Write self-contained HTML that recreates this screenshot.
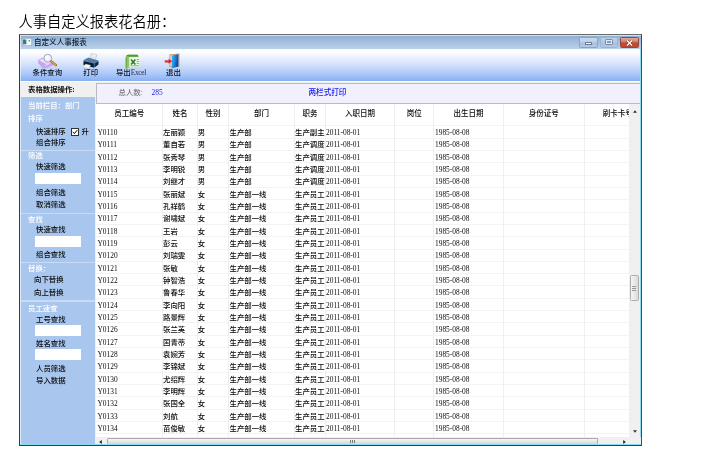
<!DOCTYPE html>
<html lang="zh-CN"><head><meta charset="utf-8"><title>人事自定义报表花名册</title>
<style>
html,body{margin:0;padding:0;background:#fff;}
body{width:710px;height:470px;position:relative;overflow:hidden;font-family:"Liberation Serif","Noto Sans CJK SC",serif;}
.a{position:absolute;}
.t{position:absolute;white-space:nowrap;font-size:7.4px;line-height:10px;height:10px;color:#0a0a0a;font-weight:500;filter:blur(0.3px);}
.w{color:#fff;}
.sb{font-size:7.4px;}
.inp{position:absolute;background:#fff;left:34.5px;width:46.5px;height:11px;}
.sep{position:absolute;left:21px;width:74px;height:1.4px;background:#c8dbf5;}
.hl{position:absolute;left:96px;width:533px;height:1px;background:#f3f3f3;}
.vl{position:absolute;width:1px;background:#efefef;}
.h{position:absolute;white-space:nowrap;font-size:7.5px;line-height:10px;height:10px;color:#0a0a0a;font-weight:500;text-align:center;top:108.7px;filter:blur(0.3px);}
</style></head><body>
<div class="a" id="hd" style="left:18.5px;top:12px;font-weight:350;font-family:'Liberation Sans','Noto Sans CJK SC',sans-serif;font-size:14.25px;line-height:20px;color:#000;white-space:nowrap;transform-origin:0 50%;transform:scaleY(1.07)">人事自定义报表花名册：</div>
<!-- window frame -->
<div class="a" id="win" style="left:19px;top:34px;width:623px;height:412px;background:#f0f0f0;box-sizing:border-box;border:1px solid #155a72;border-top-color:#6a6a6a;border-left-color:#3a3a3a;border-bottom-color:#0f4d5e;"></div>
<!-- title bar -->
<div class="a" style="left:20px;top:35px;width:621px;height:14px;background:linear-gradient(#d3e2f3 0,#d3e2f3 1px,#90b1d6 1.5px,#a6c2e1 55%,#bbd1ea 100%);"></div>
<svg class="a" style="left:22px;top:38px" width="10" height="8" viewBox="0 0 10 8"><rect x="0.3" y="0.3" width="9.4" height="7.4" fill="#f4f6f8" stroke="#9aa6b4" stroke-width="0.6"/><rect x="1.2" y="1.6" width="3.2" height="4.6" fill="#2f8f6a"/><rect x="1.2" y="1.6" width="1.6" height="4.6" fill="#2b6fa8"/><rect x="6.6" y="2" width="1.4" height="1.4" fill="#3b8ad0"/></svg>
<div class="t" style="left:34px;top:37.5px;font-size:7.55px;color:#10182a;font-weight:500">自定义人事报表</div>
<div class="a" style="left:579px;top:37.4px;width:18.5px;height:10.2px;border-radius:1.5px;background:linear-gradient(#c9d9ee 0%,#bccfe8 48%,#a9c1e1 52%,#b0c7e5 100%);box-sizing:border-box;border:1px solid #8ba4c6;"></div>
<div class="a" style="left:585px;top:42px;width:7px;height:3px;background:#fbfcfe;border:0.6px solid #6a7a92;box-sizing:border-box;border-radius:0.5px"></div>
<div class="a" style="left:600px;top:37.4px;width:18px;height:10.2px;border-radius:1.5px;background:linear-gradient(#bdd0e9 0%,#b2c8e4 48%,#a7bfdf 52%,#b0c7e5 100%);box-sizing:border-box;border:1px solid #9cb4d2;"></div>
<div class="a" style="left:605px;top:39.3px;width:8px;height:5.7px;border:1px solid #7c8ca6;box-sizing:border-box;background:#dfe7f2;border-radius:1.2px"></div>
<div class="a" style="left:607.3px;top:41.4px;width:3.4px;height:1.5px;background:#8a9ab2;"></div>
<div class="a" style="left:620px;top:37.4px;width:19px;height:10.2px;border-radius:1.5px;background:linear-gradient(#e2aa9a 0%,#d37a66 45%,#c24c36 52%,#bd4834 100%);box-sizing:border-box;border:1px solid #94483c;"></div>
<svg class="a" style="left:625px;top:38.5px" width="9" height="8" viewBox="0 0 9 8"><path d="M2 1.6 L7 6.4 M7 1.6 L2 6.4" stroke="#7c3226" stroke-width="2.4"/><path d="M2 1.6 L7 6.4 M7 1.6 L2 6.4" stroke="#fff" stroke-width="1.4"/></svg>
<div class="a" style="left:20px;top:49px;width:621px;height:32px;background:linear-gradient(#f6f9fe 0%,#ffffff 6%,#f0f5fe 22%,#d1e0fb 50%,#abc8f8 78%,#87b0f4 100%);"></div>
<div class="a" style="left:20px;top:81px;width:621px;height:1px;background:#fafafa;"></div>
<div class="a" style="left:20px;top:35px;width:1px;height:62px;background:rgba(255,255,255,0.55);"></div>
<svg class="a" style="left:30px;top:48px" width="40" height="32" viewBox="30 48 40 32">
<path d="M38.2 60 L42.4 57.6 L53.2 61.6 L53 65.6 L45 68.6 L42.6 68 L38.4 63.2 Z" fill="#c9a2f0"/>
<path d="M39 60.2 L42.6 58.4 L52.2 62 L47 64.6 Z" fill="#e3d2f8"/>
<path d="M40.6 60.8 L45.4 62.6 M42 60 L47 62 M44.6 65.6 L49.6 63.6" stroke="#f6f0fc" stroke-width="0.7"/>
<circle cx="47.8" cy="58.2" r="3.9" fill="#eceef5" stroke="#a3a7c6" stroke-width="1"/>
<circle cx="47.4" cy="57.6" r="2.2" fill="#f8f9fc"/>
<path d="M51.3 61.4 L55.9 65.2" stroke="#8a5a18" stroke-width="2.2" stroke-linecap="round"/>
<path d="M51.5 61.5 L55.8 65.1" stroke="#f2a230" stroke-width="1.4" stroke-linecap="round"/>
</svg>
<div class="t" style="left:32.5px;top:68.3px;color:#0b1020;font-weight:500">条件查询</div>
<svg class="a" style="left:72px;top:48px" width="40" height="32" viewBox="72 48 40 32">
<path d="M89.8 59.2 L91.4 53.6 L97 54.9 L94.8 60.6 Z" fill="#f6f8fa" stroke="#9fa8b6" stroke-width="0.5"/>
<path d="M91.6 55.6 L95.6 56.6 M91.2 57 L95 58 M90.8 58.3 L94.4 59.3" stroke="#b8c0cc" stroke-width="0.45"/>
<path d="M83.6 60 L88.4 57.6 L98.4 60.4 L98.4 64.6 L94 67.8 L83.6 65 Z" fill="#2f93e4"/>
<path d="M84.6 60.3 L88.6 58.3 L97.4 60.7 L93.8 62.9 Z" fill="#6e767f"/>
<path d="M83.6 61.2 L93.8 63.6 L93.8 67.6 L83.6 65 Z" fill="#14171c"/>
<path d="M94.6 63.6 L98.4 61.2 L98.4 64.6 L94.6 67.4 Z" fill="#23262d"/>
<path d="M85.6 64 L90.6 65.2 L88.8 68.6 L83 67 Z" fill="#f6f7f9" stroke="#b0b6c0" stroke-width="0.35"/>
</svg>
<div class="t" style="left:83.3px;top:68.3px;color:#0b1020;font-weight:500">打印</div>
<svg class="a" style="left:110px;top:48px" width="40" height="32" viewBox="110 48 40 32">
<path d="M125.6 68.4 L125.6 57.6 Q125.6 54.8 128.4 54.8 L137.6 54.8 L138.6 56.6 L130 56.8 Q129.4 56.8 129.4 57.6 L129.4 67.6 Z" fill="#8fca62"/>
<path d="M126.4 56 Q127 54.8 128.4 54.8 L137.6 54.8 L138.6 56.8 L129.6 56.8 Z" fill="#4e9c2c"/>
<path d="M125.6 58 L125.6 68.4 L127.2 68 L127.2 57 Z" fill="#6db444"/>
<rect x="129.6" y="57.8" width="9.6" height="9.2" fill="#f4f9f0"/>
<path d="M131 59.4 L135.4 64.4 M135.4 59.4 L131 64.4" stroke="#1c7a22" stroke-width="1.5"/>
<path d="M136.6 59.6 h2.4 M136.6 61.6 h2.4 M136.6 63.6 h2.4 M130.6 65.8 h8.4" stroke="#6cb54a" stroke-width="0.9"/>
</svg>
<div class="t" style="left:115.9px;top:68.3px;color:#0b1020;font-weight:500">导出<span style="letter-spacing:-0.3px;color:#2a3048">Excel</span></div>
<svg class="a" style="left:152px;top:48px" width="40" height="32" viewBox="152 48 40 32">
<defs><linearGradient id="dg" x1="0" y1="0" x2="1" y2="0.3"><stop offset="0" stop-color="#3cc0f6"/><stop offset="0.55" stop-color="#1a86e0"/><stop offset="1" stop-color="#0a48a8"/></linearGradient></defs>
<path d="M169.4 54.6 L179.4 53.6 L179.4 66.8 L169.4 66.8 Z" fill="#c8946a"/>
<path d="M170.4 55.4 L178.4 54.6 L178.4 66 L170.4 66 Z" fill="#f2ece4"/>
<path d="M171.6 55.6 L178.4 54.2 L178.4 66.6 L171.6 68.4 Z" fill="url(#dg)"/>
<path d="M164.8 60.2 H168.6 V58.8 L172.2 61.3 L168.6 63.8 V62.4 H164.8 Z" fill="#e01c2c"/>
<path d="M165.4 60.8 H168.8" stroke="#f7a0a4" stroke-width="0.5"/>
</svg>
<div class="t" style="left:166px;top:68.3px;color:#0b1020;font-weight:500">退出</div>
<div class="a" style="left:20px;top:82px;width:75px;height:15px;background:#f0f0f0;"></div>
<div class="t" style="left:28px;top:84.5px;font-weight:700;color:#111">表格数据操作:</div>
<div class="a" style="left:20px;top:97px;width:74.6px;height:347px;background:#a9c7ee;border-left:1px solid #dfeafa;box-sizing:border-box"></div>
<div class="a" style="left:20px;top:444px;width:621px;height:1px;background:#86dcf3;"></div>
<div class="t w" style="left:28px;top:100.5px">当前栏目：部门</div>
<div class="t w" style="left:28px;top:113.5px">排序</div>
<div class="t" style="left:36px;top:126.5px">快速排序</div>
<div class="a" style="left:71px;top:128px;width:8px;height:8px;background:#fff;box-sizing:border-box;border:1px solid #333;"></div>
<svg class="a" style="left:71px;top:128px" width="8" height="8" viewBox="0 0 8 8"><path d="M1.8 3.8 L3.4 5.6 L6.2 2.2" fill="none" stroke="#000" stroke-width="1"/></svg>
<div class="t" style="left:81.5px;top:126.5px">升</div>
<div class="t" style="left:36px;top:138px">组合排序</div>
<div class="sep" style="top:149.5px"></div>
<div class="t w" style="left:28px;top:151px">筛选</div>
<div class="t" style="left:36px;top:162.3px">快速筛选</div>
<div class="inp" style="top:173.2px"></div>
<div class="t" style="left:36px;top:187.8px">组合筛选</div>
<div class="t" style="left:36px;top:199.5px">取消筛选</div>
<div class="sep" style="top:213px"></div>
<div class="t w" style="left:28px;top:215px">查找</div>
<div class="t" style="left:36px;top:224.6px">快速查找</div>
<div class="inp" style="top:236px"></div>
<div class="t" style="left:36px;top:249.9px">组合查找</div>
<div class="sep" style="top:261.5px"></div>
<div class="t w" style="left:28px;top:263.6px">替换：</div>
<div class="t" style="left:34px;top:275.2px">向下替换</div>
<div class="t" style="left:34px;top:287.8px">向上替换</div>
<div class="sep" style="top:300.3px"></div>
<div class="t w" style="left:28px;top:303.7px">员工速查</div>
<div class="t" style="left:36px;top:314.9px">工号查找</div>
<div class="inp" style="top:325px"></div>
<div class="t" style="left:36px;top:339.4px">姓名查找</div>
<div class="inp" style="top:349.3px"></div>
<div class="t" style="left:36px;top:364.1px">人员筛选</div>
<div class="t" style="left:36px;top:376.1px">导入数据</div>
<div class="a" style="left:96px;top:83px;width:544px;height:21px;background:#f1f1fe;box-sizing:border-box;border:1px solid #b9b9c2;border-right:none;"></div>
<div class="t" style="left:118.5px;top:88px;color:#777">总人数:</div>
<div class="t" style="left:151.5px;top:87.7px;color:#1414ee">285</div>
<div class="t" style="left:308.5px;top:87.7px;color:#1414ee;font-size:7.6px">两栏式打印</div>
<div class="a" style="left:96px;top:104px;width:533px;height:333px;background:#fff;"></div>
<div class="h" style="left:96px;width:66.5px">员工编号</div>
<div class="h" style="left:162.5px;width:35.1px">姓名</div>
<div class="h" style="left:197.6px;width:31px">性别</div>
<div class="h" style="left:228.6px;width:65.7px">部门</div>
<div class="h" style="left:294.3px;width:31.2px">职务</div>
<div class="h" style="left:325.5px;width:69.2px">入职日期</div>
<div class="h" style="left:394.7px;width:39.2px">岗位</div>
<div class="h" style="left:433.9px;width:69.1px">出生日期</div>
<div class="h" style="left:503px;width:81.7px">身份证号</div>
<div class="h" style="left:584.7px;width:66.3px">刷卡卡号</div>
<div class="hl" style="top:125.2px"></div>
<div class="hl" style="top:137.53px"></div>
<div class="hl" style="top:149.86px"></div>
<div class="hl" style="top:162.19px"></div>
<div class="hl" style="top:174.52px"></div>
<div class="hl" style="top:186.85px"></div>
<div class="hl" style="top:199.18px"></div>
<div class="hl" style="top:211.51px"></div>
<div class="hl" style="top:223.84px"></div>
<div class="hl" style="top:236.17px"></div>
<div class="hl" style="top:248.5px"></div>
<div class="hl" style="top:260.83px"></div>
<div class="hl" style="top:273.16px"></div>
<div class="hl" style="top:285.49px"></div>
<div class="hl" style="top:297.82px"></div>
<div class="hl" style="top:310.15px"></div>
<div class="hl" style="top:322.48px"></div>
<div class="hl" style="top:334.81px"></div>
<div class="hl" style="top:347.14px"></div>
<div class="hl" style="top:359.47px"></div>
<div class="hl" style="top:371.8px"></div>
<div class="hl" style="top:384.13px"></div>
<div class="hl" style="top:396.46px"></div>
<div class="hl" style="top:408.79px"></div>
<div class="hl" style="top:421.12px"></div>
<div class="hl" style="top:433.45px"></div>
<div class="vl" style="left:162px;top:104px;height:333px"></div>
<div class="vl" style="left:197.1px;top:104px;height:333px"></div>
<div class="vl" style="left:228.1px;top:104px;height:333px"></div>
<div class="vl" style="left:293.8px;top:104px;height:333px"></div>
<div class="vl" style="left:325px;top:104px;height:333px"></div>
<div class="vl" style="left:394.2px;top:104px;height:333px"></div>
<div class="vl" style="left:433.4px;top:104px;height:333px"></div>
<div class="vl" style="left:502.5px;top:104px;height:333px"></div>
<div class="vl" style="left:584.2px;top:104px;height:333px"></div>
<div class="t" style="left:97.5px;top:128.15px">Y0110</div><div class="t" style="left:163px;top:128.15px">左丽颖</div><div class="t" style="left:197.8px;top:128.15px">男</div><div class="t" style="left:229.5px;top:128.15px">生产部</div><div class="t" style="left:295px;top:128.15px">生产副主</div><div class="t" style="left:326px;top:128.15px">2011-08-01</div><div class="t" style="left:435px;top:128.15px">1985-08-08</div>
<div class="t" style="left:97.5px;top:140.48px">Y0111</div><div class="t" style="left:163px;top:140.48px">董自若</div><div class="t" style="left:197.8px;top:140.48px">男</div><div class="t" style="left:229.5px;top:140.48px">生产部</div><div class="t" style="left:295px;top:140.48px">生产调度</div><div class="t" style="left:326px;top:140.48px">2011-08-01</div><div class="t" style="left:435px;top:140.48px">1985-08-08</div>
<div class="t" style="left:97.5px;top:152.81px">Y0112</div><div class="t" style="left:163px;top:152.81px">张秀琴</div><div class="t" style="left:197.8px;top:152.81px">男</div><div class="t" style="left:229.5px;top:152.81px">生产部</div><div class="t" style="left:295px;top:152.81px">生产调度</div><div class="t" style="left:326px;top:152.81px">2011-08-01</div><div class="t" style="left:435px;top:152.81px">1985-08-08</div>
<div class="t" style="left:97.5px;top:165.14px">Y0113</div><div class="t" style="left:163px;top:165.14px">李明锐</div><div class="t" style="left:197.8px;top:165.14px">男</div><div class="t" style="left:229.5px;top:165.14px">生产部</div><div class="t" style="left:295px;top:165.14px">生产调度</div><div class="t" style="left:326px;top:165.14px">2011-08-01</div><div class="t" style="left:435px;top:165.14px">1985-08-08</div>
<div class="t" style="left:97.5px;top:177.47px">Y0114</div><div class="t" style="left:163px;top:177.47px">刘继才</div><div class="t" style="left:197.8px;top:177.47px">男</div><div class="t" style="left:229.5px;top:177.47px">生产部</div><div class="t" style="left:295px;top:177.47px">生产调度</div><div class="t" style="left:326px;top:177.47px">2011-08-01</div><div class="t" style="left:435px;top:177.47px">1985-08-08</div>
<div class="t" style="left:97.5px;top:189.8px">Y0115</div><div class="t" style="left:163px;top:189.8px">张丽斌</div><div class="t" style="left:197.8px;top:189.8px">女</div><div class="t" style="left:229.5px;top:189.8px">生产部一线</div><div class="t" style="left:295px;top:189.8px">生产员工</div><div class="t" style="left:326px;top:189.8px">2011-08-01</div><div class="t" style="left:435px;top:189.8px">1985-08-08</div>
<div class="t" style="left:97.5px;top:202.13px">Y0116</div><div class="t" style="left:163px;top:202.13px">孔祥鹤</div><div class="t" style="left:197.8px;top:202.13px">女</div><div class="t" style="left:229.5px;top:202.13px">生产部一线</div><div class="t" style="left:295px;top:202.13px">生产员工</div><div class="t" style="left:326px;top:202.13px">2011-08-01</div><div class="t" style="left:435px;top:202.13px">1985-08-08</div>
<div class="t" style="left:97.5px;top:214.46px">Y0117</div><div class="t" style="left:163px;top:214.46px">谢啸斌</div><div class="t" style="left:197.8px;top:214.46px">女</div><div class="t" style="left:229.5px;top:214.46px">生产部一线</div><div class="t" style="left:295px;top:214.46px">生产员工</div><div class="t" style="left:326px;top:214.46px">2011-08-01</div><div class="t" style="left:435px;top:214.46px">1985-08-08</div>
<div class="t" style="left:97.5px;top:226.79px">Y0118</div><div class="t" style="left:163px;top:226.79px">王岩</div><div class="t" style="left:197.8px;top:226.79px">女</div><div class="t" style="left:229.5px;top:226.79px">生产部一线</div><div class="t" style="left:295px;top:226.79px">生产员工</div><div class="t" style="left:326px;top:226.79px">2011-08-01</div><div class="t" style="left:435px;top:226.79px">1985-08-08</div>
<div class="t" style="left:97.5px;top:239.12px">Y0119</div><div class="t" style="left:163px;top:239.12px">彭云</div><div class="t" style="left:197.8px;top:239.12px">女</div><div class="t" style="left:229.5px;top:239.12px">生产部一线</div><div class="t" style="left:295px;top:239.12px">生产员工</div><div class="t" style="left:326px;top:239.12px">2011-08-01</div><div class="t" style="left:435px;top:239.12px">1985-08-08</div>
<div class="t" style="left:97.5px;top:251.45px">Y0120</div><div class="t" style="left:163px;top:251.45px">刘瑞雯</div><div class="t" style="left:197.8px;top:251.45px">女</div><div class="t" style="left:229.5px;top:251.45px">生产部一线</div><div class="t" style="left:295px;top:251.45px">生产员工</div><div class="t" style="left:326px;top:251.45px">2011-08-01</div><div class="t" style="left:435px;top:251.45px">1985-08-08</div>
<div class="t" style="left:97.5px;top:263.78px">Y0121</div><div class="t" style="left:163px;top:263.78px">张敏</div><div class="t" style="left:197.8px;top:263.78px">女</div><div class="t" style="left:229.5px;top:263.78px">生产部一线</div><div class="t" style="left:295px;top:263.78px">生产员工</div><div class="t" style="left:326px;top:263.78px">2011-08-01</div><div class="t" style="left:435px;top:263.78px">1985-08-08</div>
<div class="t" style="left:97.5px;top:276.11px">Y0122</div><div class="t" style="left:163px;top:276.11px">钟智浩</div><div class="t" style="left:197.8px;top:276.11px">女</div><div class="t" style="left:229.5px;top:276.11px">生产部一线</div><div class="t" style="left:295px;top:276.11px">生产员工</div><div class="t" style="left:326px;top:276.11px">2011-08-01</div><div class="t" style="left:435px;top:276.11px">1985-08-08</div>
<div class="t" style="left:97.5px;top:288.44px">Y0123</div><div class="t" style="left:163px;top:288.44px">鲁春华</div><div class="t" style="left:197.8px;top:288.44px">女</div><div class="t" style="left:229.5px;top:288.44px">生产部一线</div><div class="t" style="left:295px;top:288.44px">生产员工</div><div class="t" style="left:326px;top:288.44px">2011-08-01</div><div class="t" style="left:435px;top:288.44px">1985-08-08</div>
<div class="t" style="left:97.5px;top:300.77px">Y0124</div><div class="t" style="left:163px;top:300.77px">李向阳</div><div class="t" style="left:197.8px;top:300.77px">女</div><div class="t" style="left:229.5px;top:300.77px">生产部一线</div><div class="t" style="left:295px;top:300.77px">生产员工</div><div class="t" style="left:326px;top:300.77px">2011-08-01</div><div class="t" style="left:435px;top:300.77px">1985-08-08</div>
<div class="t" style="left:97.5px;top:313.1px">Y0125</div><div class="t" style="left:163px;top:313.1px">路景辉</div><div class="t" style="left:197.8px;top:313.1px">女</div><div class="t" style="left:229.5px;top:313.1px">生产部一线</div><div class="t" style="left:295px;top:313.1px">生产员工</div><div class="t" style="left:326px;top:313.1px">2011-08-01</div><div class="t" style="left:435px;top:313.1px">1985-08-08</div>
<div class="t" style="left:97.5px;top:325.43px">Y0126</div><div class="t" style="left:163px;top:325.43px">张兰英</div><div class="t" style="left:197.8px;top:325.43px">女</div><div class="t" style="left:229.5px;top:325.43px">生产部一线</div><div class="t" style="left:295px;top:325.43px">生产员工</div><div class="t" style="left:326px;top:325.43px">2011-08-01</div><div class="t" style="left:435px;top:325.43px">1985-08-08</div>
<div class="t" style="left:97.5px;top:337.76px">Y0127</div><div class="t" style="left:163px;top:337.76px">国青蒂</div><div class="t" style="left:197.8px;top:337.76px">女</div><div class="t" style="left:229.5px;top:337.76px">生产部一线</div><div class="t" style="left:295px;top:337.76px">生产员工</div><div class="t" style="left:326px;top:337.76px">2011-08-01</div><div class="t" style="left:435px;top:337.76px">1985-08-08</div>
<div class="t" style="left:97.5px;top:350.09px">Y0128</div><div class="t" style="left:163px;top:350.09px">袁婉芳</div><div class="t" style="left:197.8px;top:350.09px">女</div><div class="t" style="left:229.5px;top:350.09px">生产部一线</div><div class="t" style="left:295px;top:350.09px">生产员工</div><div class="t" style="left:326px;top:350.09px">2011-08-01</div><div class="t" style="left:435px;top:350.09px">1985-08-08</div>
<div class="t" style="left:97.5px;top:362.42px">Y0129</div><div class="t" style="left:163px;top:362.42px">李锦斌</div><div class="t" style="left:197.8px;top:362.42px">女</div><div class="t" style="left:229.5px;top:362.42px">生产部一线</div><div class="t" style="left:295px;top:362.42px">生产员工</div><div class="t" style="left:326px;top:362.42px">2011-08-01</div><div class="t" style="left:435px;top:362.42px">1985-08-08</div>
<div class="t" style="left:97.5px;top:374.75px">Y0130</div><div class="t" style="left:163px;top:374.75px">尤绍辉</div><div class="t" style="left:197.8px;top:374.75px">女</div><div class="t" style="left:229.5px;top:374.75px">生产部一线</div><div class="t" style="left:295px;top:374.75px">生产员工</div><div class="t" style="left:326px;top:374.75px">2011-08-01</div><div class="t" style="left:435px;top:374.75px">1985-08-08</div>
<div class="t" style="left:97.5px;top:387.08px">Y0131</div><div class="t" style="left:163px;top:387.08px">李明辉</div><div class="t" style="left:197.8px;top:387.08px">女</div><div class="t" style="left:229.5px;top:387.08px">生产部一线</div><div class="t" style="left:295px;top:387.08px">生产员工</div><div class="t" style="left:326px;top:387.08px">2011-08-01</div><div class="t" style="left:435px;top:387.08px">1985-08-08</div>
<div class="t" style="left:97.5px;top:399.41px">Y0132</div><div class="t" style="left:163px;top:399.41px">张国全</div><div class="t" style="left:197.8px;top:399.41px">女</div><div class="t" style="left:229.5px;top:399.41px">生产部一线</div><div class="t" style="left:295px;top:399.41px">生产员工</div><div class="t" style="left:326px;top:399.41px">2011-08-01</div><div class="t" style="left:435px;top:399.41px">1985-08-08</div>
<div class="t" style="left:97.5px;top:411.74px">Y0133</div><div class="t" style="left:163px;top:411.74px">刘航</div><div class="t" style="left:197.8px;top:411.74px">女</div><div class="t" style="left:229.5px;top:411.74px">生产部一线</div><div class="t" style="left:295px;top:411.74px">生产员工</div><div class="t" style="left:326px;top:411.74px">2011-08-01</div><div class="t" style="left:435px;top:411.74px">1985-08-08</div>
<div class="t" style="left:97.5px;top:424.07px">Y0134</div><div class="t" style="left:163px;top:424.07px">苗俊敏</div><div class="t" style="left:197.8px;top:424.07px">女</div><div class="t" style="left:229.5px;top:424.07px">生产部一线</div><div class="t" style="left:295px;top:424.07px">生产员工</div><div class="t" style="left:326px;top:424.07px">2011-08-01</div><div class="t" style="left:435px;top:424.07px">1985-08-08</div>
<div class="a" style="left:629px;top:104px;width:11px;height:340px;background:#f0f0f0;"></div>
<div class="a" style="left:640px;top:49px;width:1px;height:396px;background:#8fdcf2;"></div>
<div class="a" style="left:95.5px;top:437px;width:545.5px;height:7px;background:#f0f0f0;"></div>
<div class="a" style="left:629.5px;top:275px;width:9px;height:25.5px;border-radius:1.5px;background:linear-gradient(90deg,#f5f5f5,#dadada);box-sizing:border-box;border:1px solid #adadad;"></div>
<div class="a" style="left:632px;top:285.5px;width:3.5px;height:1px;background:#999;box-shadow:0 2px 0 #999,0 4px 0 #999;"></div>
<div class="a" style="left:107px;top:437.5px;width:490.5px;height:6.5px;border-radius:1.5px;background:linear-gradient(#f7f7f7,#d6d6d6);box-sizing:border-box;border:1px solid #a8a8a8;border-bottom:none"></div>
<div class="a" style="left:350px;top:439.5px;width:1px;height:3px;background:#777;box-shadow:2px 0 0 #777,4px 0 0 #777;"></div>
<svg class="a" style="left:632.5px;top:109.5px" width="4" height="3" viewBox="0 0 4 3"><path d="M0 2.8 L2 0.2 L4 2.8 Z" fill="#333"/></svg>
<svg class="a" style="left:632.5px;top:430px" width="4" height="3" viewBox="0 0 4 3"><path d="M0 0.2 L2 2.8 L4 0.2 Z" fill="#333"/></svg>
<svg class="a" style="left:99px;top:439.5px" width="3" height="4" viewBox="0 0 3 4"><path d="M2.8 0 L0.2 2 L2.8 4 Z" fill="#222"/></svg>
<svg class="a" style="left:622.5px;top:439.5px" width="3" height="4" viewBox="0 0 3 4"><path d="M0.2 0 L2.8 2 L0.2 4 Z" fill="#222"/></svg>
</body></html>
